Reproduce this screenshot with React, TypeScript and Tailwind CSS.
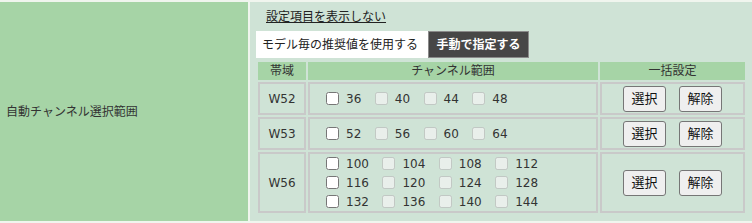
import React from "react";

const bands = [
  { name: "W52", rows: [[36, 40, 44, 48]], height: "h-[33px]" },
  { name: "W53", rows: [[52, 56, 60, 64]], height: "h-[33px]" },
  {
    name: "W56",
    rows: [
      [100, 104, 108, 112],
      [116, 120, 124, 128],
      [132, 136, 140, 144],
    ],
    height: "h-[61px]",
  },
];

function Channel({ ch, enabled }: { ch: number; enabled: boolean }) {
  return (
    <label className="flex items-center">
      <input type="checkbox" disabled={!enabled} className="m-0 h-[13px] w-[13px]" />
      <span className="ml-[7px]">{ch}</span>
    </label>
  );
}

export default function App() {
  return (
    <div
      className="flex h-[223px] w-[752px] gap-[2px] bg-[#f0f5ee] py-[2px] text-[12px] text-[#333]"
      style={{ fontFamily: '"DejaVu Sans", "Noto Sans CJK JP", sans-serif' }}
    >
      {/* Label column */}
      <div className="flex w-[248px] shrink-0 items-center bg-[#a6d4a6] pl-[6px]">
        自動チャンネル選択範囲
      </div>

      {/* Setting column */}
      <div className="flex-1 bg-[#cfe3d6] pt-[6px]">
        <a className="ml-[16px] block w-fit leading-[19px] text-[#222] underline">設定項目を表示しない</a>

        {/* Mode tabs */}
        <div className="ml-[6px] mt-[4px] flex h-[27px]">
          <div className="flex w-[172px] items-center bg-white pl-[6px] text-[#222]">
            モデル毎の推奨値を使用する
          </div>
          <div className="flex w-[101px] items-center justify-center border border-[#8a8a8a] bg-[#474747] font-bold text-white">
            手動で指定する
          </div>
        </div>

        {/* Channel table */}
        <div className="ml-[8px] mt-[4px] grid w-[487px] grid-cols-[48px_290px_145px] gap-[2px]">
          <div className="flex h-[18px] items-center justify-center bg-[#a6d4a6]">帯域</div>
          <div className="flex h-[18px] items-center justify-center bg-[#a6d4a6]">チャンネル範囲</div>
          <div className="flex h-[18px] items-center justify-center bg-[#a6d4a6]">一括設定</div>

          {bands.map((band) => (
            <React.Fragment key={band.name}>
              <div
                className={`flex ${band.height} items-center justify-center border-2 border-[#c9c9c9]`}
              >
                {band.name}
              </div>
              <div
                className={`flex ${band.height} flex-col justify-center border-2 border-[#c9c9c9] pl-[16px]`}
              >
                {band.rows.map((row, i) => (
                  <div key={i} className="flex h-[19px] items-center gap-x-[13.5px]">
                    {row.map((ch, j) => (
                      <Channel key={ch} ch={ch} enabled={j === 0} />
                    ))}
                  </div>
                ))}
              </div>
              <div
                className={`flex ${band.height} items-center justify-center gap-[13px] border-2 border-[#c9c9c9]`}
              >
                <button
                  type="button"
                  className="h-[26px] w-[43px] rounded-[3px] border border-[#767676] bg-[#efefef] text-[13px] text-[#111]"
                >
                  選択
                </button>
                <button
                  type="button"
                  className="h-[26px] w-[43px] rounded-[3px] border border-[#767676] bg-[#efefef] text-[13px] text-[#111]"
                >
                  解除
                </button>
              </div>
            </React.Fragment>
          ))}
        </div>
      </div>
    </div>
  );
}
